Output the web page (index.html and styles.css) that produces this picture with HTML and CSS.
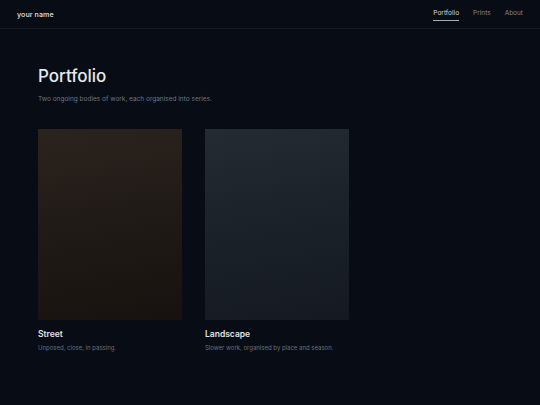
FILE: index.html
```html
<!DOCTYPE html>
<html lang="en">
<head>
    <meta charset="UTF-8">
    <meta name="viewport" content="width=device-width, initial-scale=1.0">
    <title>Portfolio</title>
    <link rel="stylesheet" href="styles.css">
</head>
<body>

<header class="site-header">
    <a href="#" class="brand">your name</a>
    <nav class="nav">
        <a href="#" class="active">Portfolio</a>
        <a href="#">Prints</a>
        <a href="#">About</a>
    </nav>
</header>

<main class="main-content">
    <h1 class="page-title">Portfolio</h1>
    <p class="page-intro">Two ongoing bodies of work, each organised into series.</p>

    <div class="series-grid">
        <a href="#" class="series">
            <div class="series-cover cover-street"></div>
            <h2>Street</h2>
            <p>Unposed, close, in passing.</p>
        </a>
        <a href="#" class="series">
            <div class="series-cover cover-landscape"></div>
            <h2>Landscape</h2>
            <p>Slower work, organised by place and season.</p>
        </a>
    </div>
</main>

</body>
</html>
```

FILE: styles.css
```css
body {
    font-family: Inter, "Noto Sans", sans-serif;
    margin: 0;
    padding: 0;
    background-color: #080c14;
    color: #e4e6ea;
}
a {
    color: inherit;
    text-decoration: none;
}
.site-header {
    display: flex;
    align-items: center;
    justify-content: space-between;
    height: 28px;
    padding: 0 17px;
    border-bottom: 1px solid #141923;
}
.brand {
    font-size: 7px;
    font-weight: 600;
    color: #d0d2d6;
    letter-spacing: 0.1px;
}
.nav {
    display: flex;
    gap: 14px;
}
.nav a {
    font-size: 6.5px;
    color: #80858f;
    padding: 2px 0 3px;
    border-bottom: 1px solid transparent;
}
.nav a.active {
    color: #d6d8dc;
    border-bottom-color: #a9adb4;
}
.main-content {
    padding: 35px 38px 40px;
}
.page-title {
    margin: 0;
    font-size: 17px;
    font-weight: 500;
    line-height: 24px;
    color: #e6e8ec;
}
.page-intro {
    margin: 7px 0 0;
    font-size: 6.5px;
    color: #6e7480;
}
.series-grid {
    display: grid;
    grid-template-columns: 144px 144px;
    gap: 23px;
    margin-top: 26px;
}
.series-cover {
    height: 191px;
}
.cover-street {
    background: linear-gradient(170deg, #2b231e 0%, #211b17 45%, #17120f 100%);
}
.cover-landscape {
    background: linear-gradient(170deg, #242b32 0%, #1c222a 45%, #151a21 100%);
}
.series h2 {
    margin: 9px 0 0;
    font-size: 8.5px;
    font-weight: 600;
    color: #e2e4e8;
}
.series p {
    margin: 5px 0 0;
    font-size: 6px;
    color: #6a707b;
}
```
